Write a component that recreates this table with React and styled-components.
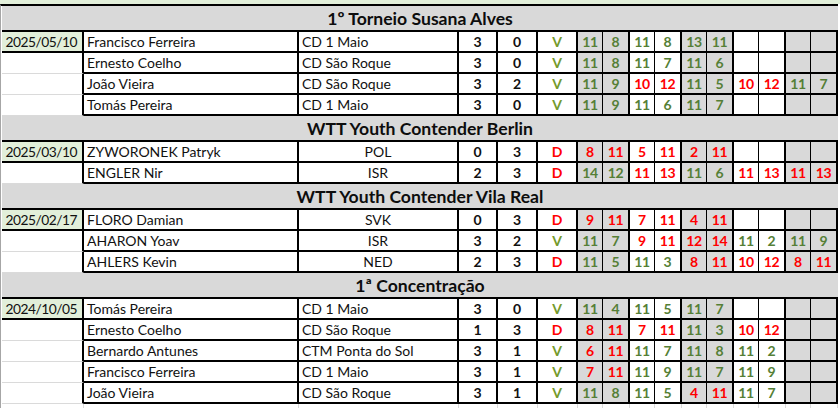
import React from 'react';
import styled, { createGlobalStyle } from 'styled-components';

const GlobalStyle = createGlobalStyle`
  html, body {
    margin: 0;
    padding: 0;
    background: #fff;
  }
  body {
    font-family: 'Lato', 'Liberation Sans', sans-serif;
    color: #111;
  }
  * {
    box-sizing: border-box;
  }
`;

const GREEN = '#557f36';
const RED = '#ff0000';
const COLUMNS = '82px 215px 160px 39px 40px 40px repeat(5, 25px 27px)';

const Page = styled.div`
  width: 840px;
  height: 408px;
  overflow: hidden;
`;

const TopStrip = styled.div`
  height: 4px;
  background: #e2efda;
`;

const Sheet = styled.div`
  width: 838px;
  border-left: 1px solid #a6a6a6;
  padding-left: 1px;
  border-top: 2px solid #000;
`;

const SectionHeader = styled.div`
  height: 26px;
  background: #d9d9d9;
  border-bottom: 2px solid #000;
  display: flex;
  align-items: center;
  justify-content: center;
  font-weight: 700;
  font-size: 17.6px;
  color: #0d0d0d;
`;

const Row = styled.div`
  display: grid;
  grid-template-columns: ${COLUMNS};
  height: ${(p) => p.$height || 21}px;
`;

const DateCell = styled.div`
  display: flex;
  align-items: center;
  justify-content: flex-end;
  padding-right: 5px;
  font-size: 13.8px;
  letter-spacing: -0.5px;
  background: ${(p) => (p.$first ? '#e2efda' : '#fff')};
  border-right: 2px solid #000;
  border-bottom: ${(p) => (p.$first ? '2px solid #000' : '1px solid #dadada')};
`;

const TextCell = styled.div`
  display: flex;
  align-items: center;
  justify-content: ${(p) => (p.$center ? 'center' : 'flex-start')};
  padding-left: ${(p) => (p.$center ? 0 : 3)}px;
  font-size: 14px;
  white-space: nowrap;
  overflow: hidden;
  border-right: 2px solid #000;
  border-bottom: 2px solid #000;
`;

const ScoreCell = styled.div`
  display: flex;
  align-items: center;
  justify-content: center;
  font-weight: 700;
  font-size: 14px;
  color: ${(p) => p.$color || '#111'};
  border-right: 2px solid #000;
  border-bottom: 2px solid #000;
`;

const GameCell = styled.div`
  display: flex;
  align-items: center;
  justify-content: center;
  font-weight: 700;
  font-size: 14px;
  letter-spacing: -0.3px;
  color: ${(p) => p.$color};
  background: ${(p) => (p.$shade ? '#d9d9d9' : '#fff')};
  border-right: ${(p) => (p.$thin ? 1 : 2)}px solid #000;
  border-bottom: 2px solid #000;
`;

const GridCell = styled.div`
  border-right: 1px solid #dadada;
`;

const sections = [
  {
    title: '1º Torneio Susana Alves',
    date: '2025/05/10',
    rows: [
      ['Francisco Ferreira', 'CD 1 Maio', 3, 0, 'V', [11, 8, 11, 8, 13, 11]],
      ['Ernesto Coelho', 'CD São Roque', 3, 0, 'V', [11, 8, 11, 7, 11, 6]],
      ['João Vieira', 'CD São Roque', 3, 2, 'V', [11, 9, 10, 12, 11, 5, 10, 12, 11, 7]],
      ['Tomás Pereira', 'CD 1 Maio', 3, 0, 'V', [11, 9, 11, 6, 11, 7]],
    ],
  },
  {
    title: 'WTT Youth Contender Berlin',
    date: '2025/03/10',
    country: true,
    rows: [
      ['ZYWORONEK Patryk', 'POL', 0, 3, 'D', [8, 11, 5, 11, 2, 11]],
      ['ENGLER Nir', 'ISR', 2, 3, 'D', [14, 12, 11, 13, 11, 6, 11, 13, 11, 13]],
    ],
  },
  {
    title: 'WTT Youth Contender Vila Real',
    date: '2025/02/17',
    country: true,
    rows: [
      ['FLORO Damian', 'SVK', 0, 3, 'D', [9, 11, 7, 11, 4, 11]],
      ['AHARON Yoav', 'ISR', 3, 2, 'V', [11, 7, 9, 11, 12, 14, 11, 2, 11, 9]],
      ['AHLERS Kevin', 'NED', 2, 3, 'D', [11, 5, 11, 3, 8, 11, 10, 12, 8, 11]],
    ],
  },
  {
    title: '1ª Concentração',
    date: '2024/10/05',
    rows: [
      ['Tomás Pereira', 'CD 1 Maio', 3, 0, 'V', [11, 4, 11, 5, 11, 7]],
      ['Ernesto Coelho', 'CD São Roque', 1, 3, 'D', [8, 11, 7, 11, 11, 3, 10, 12]],
      ['Bernardo Antunes', 'CTM Ponta do Sol', 3, 1, 'V', [6, 11, 11, 7, 11, 8, 11, 2]],
      ['Francisco Ferreira', 'CD 1 Maio', 3, 1, 'V', [7, 11, 11, 9, 11, 7, 11, 9]],
      ['João Vieira', 'CD São Roque', 3, 1, 'V', [11, 8, 11, 5, 4, 11, 11, 7]],
    ],
  },
];

// points are listed as game pairs: a pair is green when the first number wins
const Games = ({ points }) => {
  const cells = [];
  for (let i = 0; i < 10; i++) {
    const pair = Math.floor(i / 2);
    const a = points[pair * 2];
    const b = points[pair * 2 + 1];
    cells.push(
      <GameCell key={i} $thin={i % 2 === 0} $shade={pair % 2 === 0} $color={a > b ? GREEN : RED}>
        {points[i]}
      </GameCell>
    );
  }
  return cells;
};

const App = () => {
  return (
    <Page>
      <GlobalStyle />
      <TopStrip />
      <Sheet>
        {sections.map((section) => (
          <React.Fragment key={section.title}>
            <SectionHeader>{section.title}</SectionHeader>
            {section.rows.map((row, i) => {
              const [name, club, s1, s2, result, points] = row;
              return (
                <Row key={name + i}>
                  <DateCell $first={i === 0}>{i === 0 ? section.date : ''}</DateCell>
                  <TextCell>{name}</TextCell>
                  <TextCell $center={section.country}>{club}</TextCell>
                  <ScoreCell>{s1}</ScoreCell>
                  <ScoreCell>{s2}</ScoreCell>
                  <ScoreCell $color={result === 'V' ? '#749a2c' : RED}>{result}</ScoreCell>
                  <Games points={points} />
                </Row>
              );
            })}
          </React.Fragment>
        ))}
        <Row $height={10}>
          {Array.from({ length: 16 }).map((_, i) => (
            <GridCell key={i} />
          ))}
        </Row>
      </Sheet>
    </Page>
  );
};

export default App;
